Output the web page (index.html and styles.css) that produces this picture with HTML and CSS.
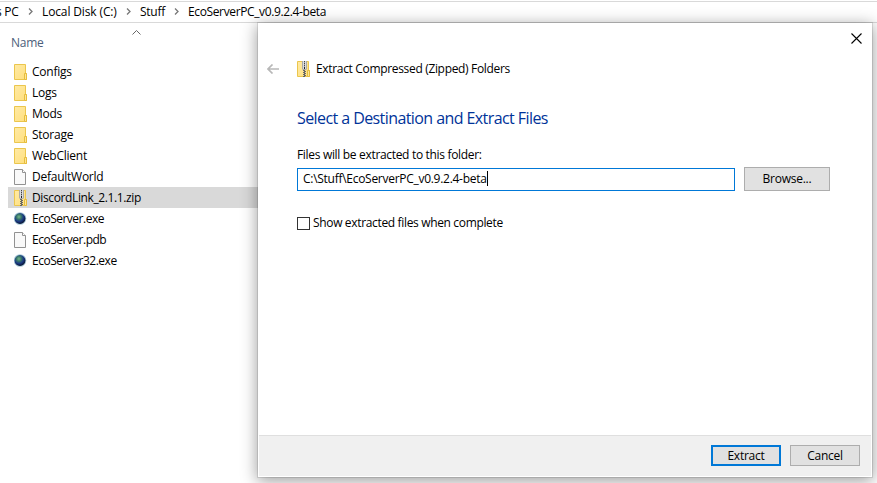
FILE: index.html
```html
<!DOCTYPE html>
<html lang="en">
<head>
<meta charset="utf-8">
<title>Extract Compressed (Zipped) Folders</title>
<link rel="stylesheet" href="styles.css">
</head>
<body>
<svg class="defs" width="0" height="0" aria-hidden="true">
  <defs>
    <linearGradient id="fold" x1="0" y1="0" x2="1" y2="1"><stop offset="0" stop-color="#ffeaa5"/><stop offset="1" stop-color="#ffdf7c"/></linearGradient>
    <radialGradient id="globe" cx=".4" cy=".35" r=".65"><stop offset="0" stop-color="#76b98a"/><stop offset=".35" stop-color="#38776a"/><stop offset=".65" stop-color="#1b3a86"/><stop offset="1" stop-color="#0a1634"/></radialGradient>
  </defs>
  <symbol id="folder" viewBox="0 0 14 16"><path d="M.5.5h11v9h1v6H.5z" fill="url(#fold)" stroke="#ebc64d"/><path d="M10.500 15.500v-6h2v6z" fill="#ffe694" stroke="#e6bd3e"/></symbol>
  <symbol id="zip" viewBox="0 0 14 16"><path d="M.5.5h11v9h1v6H.5z" fill="url(#fold)" stroke="#ebc64d"/><path d="M10.500 15.500v-6h2v6z" fill="#ffe694" stroke="#e6bd3e"/><path d="M5 0h5v8l-1 1H6L5 8z" fill="#aaa"/><path d="M6.500 0v8M8.500 0v8" stroke="#ddd"/><path d="M7.500 0v6" stroke="#444" stroke-dasharray="1 1"/><path d="M7 6h1v2H7z" fill="#222"/><path d="M6 9h2v1H6zM7 10h2v1H7zM6 11h2v1H6zM7 12h2v1H7zM6 13h2v1H6zM7 14h2v1H7zM6 15h2v1H6z" fill="#666"/></symbol>
  <symbol id="file" viewBox="0 0 14 16"><path d="M.5.5h8l3 3v12H.5z" fill="#f9f9f9" stroke="#929292"/><path d="M8.500.5v3h3" fill="#fff" stroke="#929292"/></symbol>
  <symbol id="planet" viewBox="0 0 14 16"><circle cx="6" cy="7.500" r="6.300" fill="#a7c8d9"/><circle cx="6" cy="7.500" r="5.400" fill="url(#globe)"/></symbol>
</svg>
<div class="explorer">
  <nav class="crumbs">
    <span class="crumb c1">s PC</span><svg class="chev" viewBox="0 0 5 7"><path d="M1 .5l3 3-3 3"/></svg>
    <span class="crumb c2">Local Disk (C:)</span><svg class="chev" viewBox="0 0 5 7"><path d="M1 .5l3 3-3 3"/></svg>
    <span class="crumb c3">Stuff</span><svg class="chev" viewBox="0 0 5 7"><path d="M1 .5l3 3-3 3"/></svg>
    <span class="crumb c4">EcoServerPC_v0.9.2.4-beta</span>
  </nav>
  <div class="head"><span>Name</span><svg class="sort" viewBox="0 0 9 5"><path d="M.5 4.500l4-4 4 4"/></svg></div>
  <ul class="files">
    <li><svg><use href="#folder"/></svg><span>Configs</span></li>
    <li><svg><use href="#folder"/></svg><span>Logs</span></li>
    <li><svg><use href="#folder"/></svg><span>Mods</span></li>
    <li><svg><use href="#folder"/></svg><span>Storage</span></li>
    <li><svg><use href="#folder"/></svg><span>WebClient</span></li>
    <li><svg><use href="#file"/></svg><span>DefaultWorld</span></li>
    <li class="selected"><svg><use href="#zip"/></svg><span class="snug">DiscordLink_2.1.1.zip</span></li>
    <li><svg><use href="#planet"/></svg><span class="tight">EcoServer.exe</span></li>
    <li><svg><use href="#file"/></svg><span class="tight">EcoServer.pdb</span></li>
    <li><svg><use href="#planet"/></svg><span class="tight">EcoServer32.exe</span></li>
  </ul>
</div>
<section class="dialog">
  <div class="titlebar"><svg class="close" viewBox="0 0 11 11"><path d="M.5.5l10 10M10.500.5l-10 10"/></svg></div>
  <header class="wizard"><svg class="back" viewBox="0 0 12 10"><path d="M12 5H1M5.500.5L1 5l4.500 4.500"/></svg><svg class="zipicon"><use href="#zip"/></svg><span class="wtitle">Extract Compressed (Zipped) Folders</span></header>
  <main>
    <h1><span>Select a Destination and Extract Files</span></h1>
    <p class="label"><span>Files will be extracted to this folder:</span></p>
    <div class="row"><div class="field"><span>C:\Stuff\EcoServerPC_v0.9.2.4-beta</span><i class="caret"></i></div><div class="btn browse"><span>Browse...</span></div></div>
    <div class="check"><i class="box"></i><span>Show extracted files when complete</span></div>
  </main>
  <footer><div class="btn primary"><span>Extract</span></div><div class="btn"><span>Cancel</span></div></footer>
</section>
</body>
</html>
```
FILE: styles.css
```css
* { box-sizing: border-box; }
body { margin: 0; width: 877px; height: 483px; overflow: hidden; position: relative; background: #fff; color: #000; font: 12px/16px "Open Sans", "Noto Sans", sans-serif; letter-spacing: -.25px; white-space: nowrap; }
svg { display: block; flex: none; }
.defs { position: absolute; }
.crumbs { height: 23px; border-top: 1px solid #fff; border-bottom: 1px solid #d9d9d9; box-shadow: inset 0 1px #d9d9d9; display: flex; align-items: center; }
.crumb { flex: none; }
.c1 { width: 32px; margin-left: -4px; }
.c2 { width: 84px; margin-left: 9px; letter-spacing: -.13px; }
.c3 { width: 34px; margin-left: 9px; }
.c4 { margin-left: 9px; letter-spacing: -.37px; }
.chev { width: 5px; height: 7px; fill: none; stroke: #777; stroke-width: 1.3; }
.head { height: 38px; padding: 12px 0 0 11px; color: #4c607a; display: flex; }
.sort { width: 9px; height: 5px; margin: -5px 0 0 88px; fill: none; stroke: #666; }
.files { list-style: none; margin: 0; padding: 0 0 0 8px; width: 258px; }
.files li { height: 21px; display: flex; align-items: center; padding-left: 6px; }
.files svg { width: 14px; height: 16px; margin-right: 4px; }
.snug { letter-spacing: -.38px; }
.tight { letter-spacing: -.5px; }
.selected { background: #d9d9d9; }
.dialog { position: absolute; left: 258px; top: 23px; width: 614px; height: 454px; background: #fff; border: 1px solid #fff; border-top-width: 0; box-shadow: 0 0 0 1px rgba(0,0,0,.1), 0 3px 15px 1px rgba(0,0,0,.38); display: flex; flex-direction: column; }
.titlebar { height: 32px; display: flex; justify-content: flex-end; padding: 10px 9px 0 0; }
.close { width: 11px; height: 11px; fill: none; stroke: #000; stroke-width: 1.1; }
.wizard { height: 28px; display: flex; align-items: center; padding-left: 8px; }
.back { width: 12px; height: 10px; margin-top: -1px; fill: none; stroke: #b8b8b8; stroke-width: 1.7; }
.zipicon { width: 14px; height: 16px; margin: -1px 5px 0 18px; }
.wtitle { letter-spacing: -.33px; }
main { flex: 1; padding: 23px 0 0 38px; }
h1 { margin: 0; color: #003399; font-size: 16px; font-weight: 400; line-height: 24px; letter-spacing: -.58px; }
.label { margin: 17px 0 4px; letter-spacing: -.32px; }
.row { display: flex; align-items: flex-start; height: 24px; }
.field { width: 438px; height: 23px; margin-top: 1px; border: 1px solid #0078d7; display: flex; padding: 2px 0 0 5px; letter-spacing: -.28px; }
.caret { width: 1px; height: 15px; background: #000; }
.btn { display: flex; align-items: center; justify-content: center; width: 70px; height: 21px; background: #e1e1e1; border: 1px solid #adadad; }
.browse { width: 86px; height: 24px; margin-left: 9px; }
.check { display: flex; align-items: center; margin-top: 24px; letter-spacing: -.34px; }
.box { width: 13px; height: 13px; border: 1px solid #333; margin-right: 3px; }
footer { height: 41px; border-top: 1px solid #dfdfdf; background: #f0f0f0; display: flex; justify-content: flex-end; gap: 9px; padding: 9px 11px 0 0; }
.primary { border: 2px solid #0078d7; }
```
